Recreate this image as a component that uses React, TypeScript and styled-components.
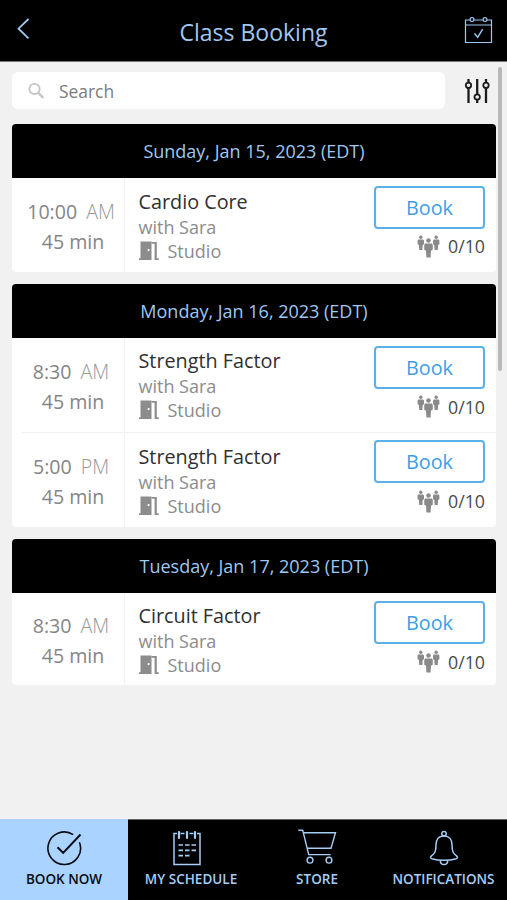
import React from "react";
import styled, { createGlobalStyle } from "styled-components";

const GlobalStyle = createGlobalStyle`
  *, *::before, *::after { box-sizing: border-box; }
  body { margin: 0; background: #f1f1f1; }
  button, input { font: inherit; }
`;

const sky = "#9fc8f2";

const Screen = styled.div`
  position: relative;
  display: flex;
  flex-direction: column;
  height: 900px;
  overflow: hidden;
  background: #f1f1f1;
  font-family: "Open Sans", "Noto Sans", sans-serif;
`;

const Header = styled.header`
  display: grid;
  grid-template-columns: 60px 1fr 60px;
  align-items: center;
  height: 62px;
  flex: none;
  background: #000;
  border-bottom: 1px solid #777;
  color: ${sky};
`;

const Title = styled.h1`
  margin: 2px 0 0;
  font-size: 23px;
  font-weight: 400;
  line-height: 32px;
  text-align: center;
`;

const IconButton = styled.button<{ $pad?: string }>`
  display: flex;
  padding: ${(p) => p.$pad ?? "0"};
  border: 0;
  background: none;
  color: inherit;
`;

const Content = styled.main`
  flex: 1;
  min-height: 0;
  padding: 10px 11px 0 12px;
`;

const SearchRow = styled.div`
  display: flex;
  align-items: center;
  gap: 19px;
  height: 37px;
  margin-bottom: 15px;
  color: #1c1c1c;
`;

const SearchBox = styled.label`
  display: flex;
  align-items: center;
  gap: 14px;
  width: 433px;
  height: 37px;
  padding-left: 16px;
  border-radius: 6px;
  background: #fff;
`;

const SearchInput = styled.input`
  width: 300px;
  padding: 0;
  border: 0;
  outline: 0;
  background: transparent;
  color: #777;
  font-size: 17.4px;
  &::placeholder { color: #7c7c7c; opacity: 1; }
`;

const DayCard = styled.section`
  width: 484px;
  margin-bottom: 12px;
  border-radius: 4px;
  overflow: hidden;
  background: #fff;
`;

const DayHeading = styled.h2`
  height: 54px;
  margin: 0;
  background: #000;
  color: ${sky};
  font-size: 18px;
  font-weight: 400;
  line-height: 54px;
  text-align: center;
`;

const ClassRow = styled.article<{ $height: number; $divided?: boolean }>`
  display: grid;
  grid-template-columns: 113px 1fr 122px;
  height: ${(p) => p.$height}px;
  background: ${(p) =>
    p.$divided ? "linear-gradient(#f1f1f1, #f1f1f1) 10px 0 / 100% 1px no-repeat" : "none"};
`;

const TimeColumn = styled.div<{ $top: number }>`
  padding: ${(p) => p.$top}px 0 0 6px;
  border-right: 1px solid #f3f3f3;
  color: #858585;
  font-size: 19.6px;
  line-height: 30px;
  text-align: center;
  white-space: pre;
`;

const Duration = styled.div`
  padding-left: 4px;
`;

const Meridiem = styled.span`
  margin-left: 9px;
  color: #999;
  font-weight: 300;
`;

const Details = styled.div<{ $top: number }>`
  padding: ${(p) => p.$top}px 0 0 13.5px;
`;

const ClassName = styled.h3`
  margin: 0;
  color: #303030;
  font-size: 19.8px;
  font-weight: 400;
  line-height: 26px;
`;

const Muted = styled.div`
  display: flex;
  align-items: center;
  gap: 9px;
  color: #8c8c8c;
  font-size: 18px;
  line-height: 24.4px;
`;

const Actions = styled.div`
  display: flex;
  flex-direction: column;
  align-items: flex-end;
  padding: 8px 11px 0 0;
`;

const BookButton = styled.button`
  width: 111px;
  height: 43px;
  padding: 1px 0 0;
  border: 2px solid #5ab1ea;
  border-radius: 4px;
  background: #fff;
  color: #3b9fe5;
  font-size: 19.8px;
  line-height: 38px;
`;

const Capacity = styled.div<{ $gap: number }>`
  display: flex;
  align-items: center;
  gap: 8px;
  margin-top: ${(p) => p.$gap}px;
  color: #4a4a4a;
  font-size: 17.8px;
  line-height: 24px;
`;

const Nav = styled.nav`
  display: grid;
  grid-template-columns: 128px 126px 126px 127px;
  flex: none;
  height: 81px;
  background: #000;
  border-top: 1px solid #666;
`;

const Tab = styled.a<{ $active?: boolean }>`
  display: flex;
  flex-direction: column;
  align-items: center;
  margin-top: ${(p) => (p.$active ? "-1px" : "0")};
  padding-top: ${(p) => (p.$active ? "9px" : "8px")};
  background: ${(p) => (p.$active ? "#aad4ff" : "#000")};
  color: ${(p) => (p.$active ? "#080c12" : "#a6cdf5")};
`;

const TabIcon = styled.span<{ $inset: number }>`
  display: flex;
  padding-right: ${(p) => p.$inset}px;
`;

const TabLabel = styled.span`
  margin-top: 1px;
  font-size: 13.5px;
  font-weight: 600;
  line-height: 20px;
  white-space: nowrap;
`;

const ScrollThumb = styled.div`
  position: absolute;
  top: 67px;
  right: 5px;
  width: 4px;
  height: 304px;
  border-radius: 2px;
  background: #b8b8b8;
`;

const line = { fill: "none", stroke: "currentColor" } as const;

const BackIcon = () => (
  <svg width="14" height="24" viewBox="0 0 14 24" {...line} strokeWidth="1.8">
    <path d="M12.5 2 2.5 11.7 12.5 21.4" />
  </svg>
);

const CalendarIcon = () => (
  <svg width="29" height="29" viewBox="0 0 29 29" {...line} strokeWidth="1.2">
    <path d="M6 4H1.5V26.5H27.5V4H23M10 4h9M1.5 9h26" />
    <circle cx="8" cy="3.6" r="1.9" />
    <circle cx="21" cy="3.6" r="1.9" />
    <path d="m10.5 17.5 3.2 3.7 5-8" strokeWidth="1.4" />
  </svg>
);

const SearchIcon = () => (
  <svg width="17" height="17" viewBox="0 0 17 17" {...line} stroke="#c4c4c4">
    <circle cx="6.5" cy="7" r="5.2" strokeWidth="1.8" />
    <path d="m10.4 11 4.2 4.2" strokeWidth="2.4" strokeLinecap="round" />
  </svg>
);

const FilterIcon = () => (
  <svg width="26" height="26" viewBox="0 0 26 26" {...line} strokeWidth="1.8">
    <path d="M4.5 1v3.5M4.5 10v15M13.2 1v15M13.2 21.5V25M22 1v3.5M22 10v15" strokeWidth="2.3" />
    <circle cx="4.5" cy="7.3" r="2.7" />
    <circle cx="13.2" cy="19" r="2.7" />
    <circle cx="22" cy="7.3" r="2.7" />
  </svg>
);

const DoorIcon = () => (
  <svg width="20" height="20" viewBox="0 0 20 20" fill="#8c8c8c">
    <path
      fillRule="evenodd"
      d="M1.5 .5h11v18.5H0V17.3h1.5zM9.6 8a1.1 1.1 0 1 0 0 2.2 1.1 1.1 0 0 0 0-2.2z"
    />
    <path d="M12.5 1h5.3v16.3h1.9V19h-4.1V2.8h-3.1z" />
  </svg>
);

const PersonShape = ({ x, y, s = 1 }: { x: number; y: number; s?: number }) => (
  <g transform={`translate(${x} ${y}) scale(${s})`}>
    <circle cx="0" cy="2.2" r="2.2" />
    <path d="M-3.2 5h6.4l.9 1.3v4.9l-1.7.8-.4 6.5h-4l-.4-6.5-1.7-.8V6.3z" />
  </g>
);

const PeopleIcon = () => (
  <svg width="23" height="23" viewBox="0 0 23 23" fill="#8a8a8a">
    <PersonShape x={3.8} y={0.6} s={0.78} />
    <PersonShape x={19.2} y={0.6} s={0.78} />
    <PersonShape x={11.5} y={3.2} s={1.04} />
  </svg>
);

const CheckCircleIcon = () => (
  <svg width="36" height="40" viewBox="0 0 36 40" {...line} strokeWidth="1.6">
    <path d="M27.2 6.6A16.3 16.3 0 1 0 33.4 14.2" />
    <path d="m11.5 19.2 5.7 5.7L34.5 6.5" strokeWidth="2" />
  </svg>
);

const ScheduleIcon = () => (
  <svg width="30" height="40" viewBox="0 0 30 40" {...line} strokeWidth="1.5">
    <path d="M5 5.5H2v31h26v-31h-3M8.5 5.5h4M17.5 5.5h4" />
    <path d="M7 4v6M15 4v6M23 4v6" strokeWidth="2.2" strokeLinecap="round" />
    <path d="M6.5 17h4.5M13 17h4.5M19.5 17H24M6.5 22.3h4.5M13 22.3h4.5M19.5 22.3H24M6.5 27.6h4.5M13 27.6h4.5" strokeWidth="1.7" />
  </svg>
);

const CartIcon = () => (
  <svg width="40" height="40" viewBox="0 0 40 40" {...line} strokeWidth="1.4">
    <path d="M1.3 2.2h4.4l6 24.4h22M6.7 4.8H38.5L34 20.2H10.4" />
    <circle cx="13" cy="32.2" r="2.9" />
    <circle cx="32" cy="32.2" r="2.9" />
  </svg>
);

const BellIcon = () => (
  <svg width="32" height="40" viewBox="0 0 32 40" {...line} strokeWidth="1.5">
    <circle cx="16" cy="5.8" r="2.2" />
    <path d="M16 8c-5.4 0-8 3.8-8 8.8 0 6.4-1 8.3-4.5 11-1.5 1.2-1.2 2.4.3 2.9 7 2.1 17.4 2.1 24.4 0 1.5-.5 1.8-1.7.3-2.9-3.5-2.7-4.5-4.6-4.5-11 0-5-2.6-8.8-8-8.8z" />
    <path d="M12.3 32.2c0 2.8 1.4 4.4 3.7 4.4s3.7-1.6 3.7-4.4" />
  </svg>
);

interface ClassItem {
  time: string;
  meridiem: string;
  name: string;
  height: number;
  timeTop: number;
  infoTop: number;
  capacityGap: number;
}

const days: { label: string; classes: ClassItem[] }[] = [
  {
    label: "Sunday, Jan 15, 2023 (EDT)",
    classes: [{ time: "10:00", meridiem: "AM", name: "Cardio Core", height: 94, timeTop: 19, infoTop: 10.6, capacityGap: 5 }],
  },
  {
    label: "Monday, Jan 16, 2023 (EDT)",
    classes: [
      { time: "8:30", meridiem: "AM", name: "Strength Factor", height: 94, timeTop: 18.5, infoTop: 9.6, capacityGap: 5.5 },
      { time: "5:00", meridiem: "PM", name: "Strength Factor", height: 95, timeTop: 20, infoTop: 11.6, capacityGap: 6 },
    ],
  },
  {
    label: "Tuesday, Jan 17, 2023 (EDT)",
    classes: [{ time: "8:30", meridiem: "AM", name: "Circuit Factor", height: 92, timeTop: 18, infoTop: 9.6, capacityGap: 5.5 }],
  },
];

const tabs = [
  { label: "BOOK NOW", icon: <CheckCircleIcon />, inset: 0, active: true },
  { label: "MY SCHEDULE", icon: <ScheduleIcon />, inset: 8 },
  { label: "STORE", icon: <CartIcon />, inset: 0 },
  { label: "NOTIFICATIONS", icon: <BellIcon />, inset: 0 },
];

export default function App() {
  return (
    <Screen>
      <GlobalStyle />
      <Header>
        <IconButton aria-label="Back" $pad="0 0 4px 16px"><BackIcon /></IconButton>
        <Title>Class Booking</Title>
        <IconButton aria-label="My calendar" $pad="0 0 0 17px"><CalendarIcon /></IconButton>
      </Header>
      <Content>
        <SearchRow>
          <SearchBox>
            <SearchIcon />
            <SearchInput placeholder="Search" />
          </SearchBox>
          <IconButton aria-label="Filters"><FilterIcon /></IconButton>
        </SearchRow>
        {days.map((day) => (
          <DayCard key={day.label}>
            <DayHeading>{day.label}</DayHeading>
            {day.classes.map((item, index) => (
              <ClassRow key={item.time} $height={item.height} $divided={index > 0}>
                <TimeColumn $top={item.timeTop}>
                  <div>{item.time}<Meridiem>{item.meridiem}</Meridiem></div>
                  <Duration>45 min</Duration>
                </TimeColumn>
                <Details $top={item.infoTop}>
                  <ClassName>{item.name}</ClassName>
                  <Muted>with Sara</Muted>
                  <Muted><DoorIcon />Studio</Muted>
                </Details>
                <Actions>
                  <BookButton>Book</BookButton>
                  <Capacity $gap={item.capacityGap}><PeopleIcon />0/10</Capacity>
                </Actions>
              </ClassRow>
            ))}
          </DayCard>
        ))}
      </Content>
      <Nav>
        {tabs.map((tab) => (
          <Tab key={tab.label} $active={tab.active}>
            <TabIcon $inset={tab.inset}>{tab.icon}</TabIcon>
            <TabLabel>{tab.label}</TabLabel>
          </Tab>
        ))}
      </Nav>
      <ScrollThumb />
    </Screen>
  );
}
